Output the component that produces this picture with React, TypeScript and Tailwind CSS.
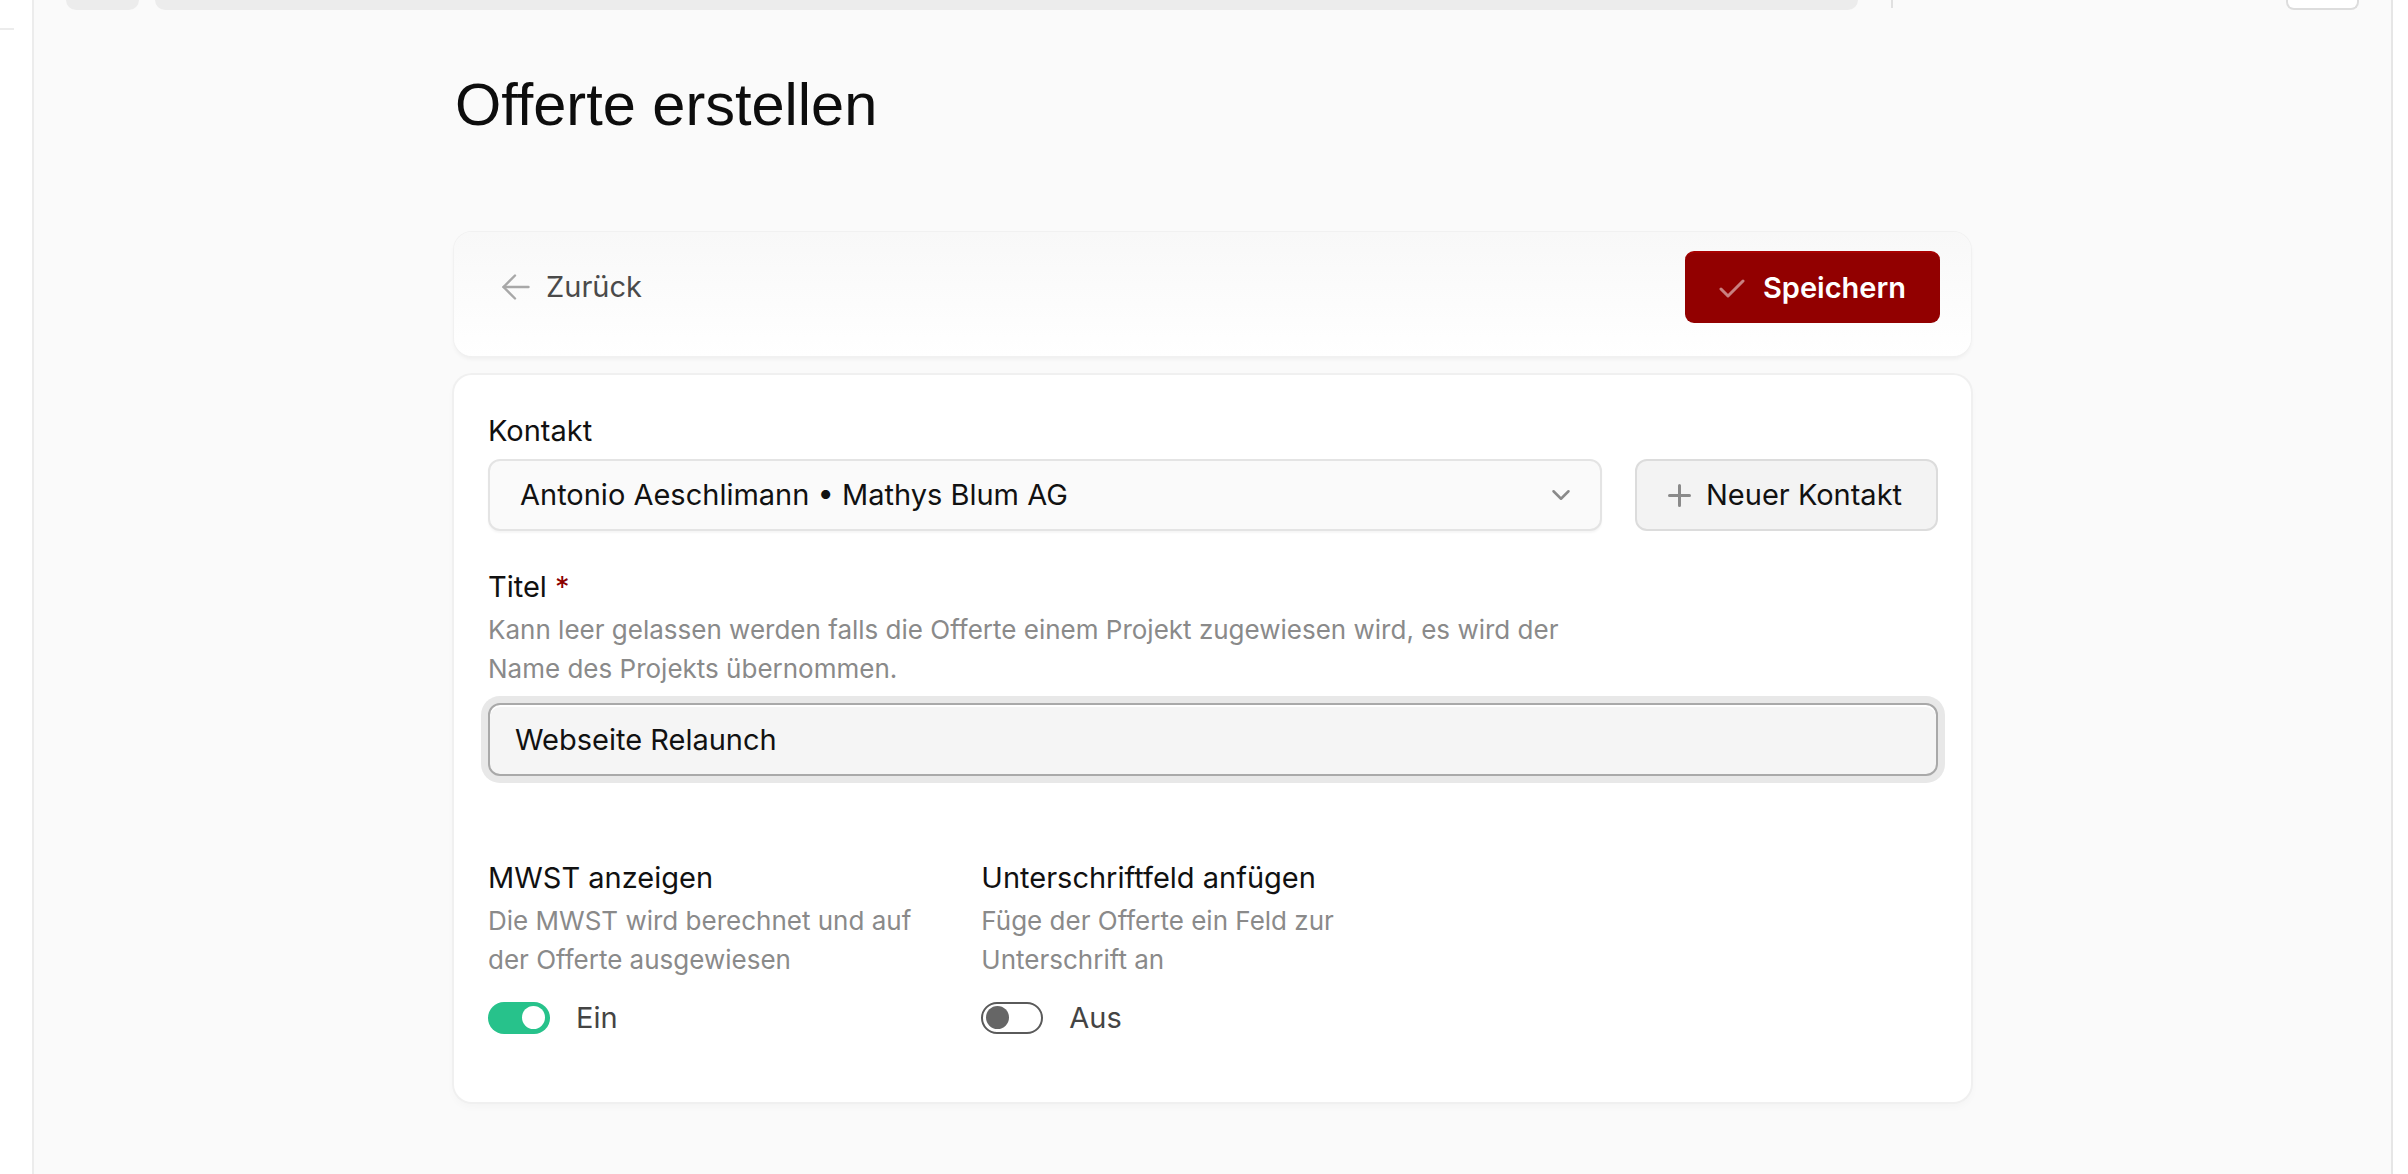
import React from "react";

const inter = { fontFamily: "Inter, 'Noto Sans', sans-serif" };

function Toggle({ on }: { on: boolean }) {
  return on ? (
    <div className="flex h-[32px] w-[62px] items-center justify-end rounded-full bg-[#27c28b] pr-[5px]">
      <div className="h-[23px] w-[23px] rounded-full bg-white" />
    </div>
  ) : (
    <div className="flex h-[32px] w-[62px] items-center justify-start rounded-full border-2 border-[#5a5a5a] bg-white pl-[3px]">
      <div className="h-[23px] w-[23px] rounded-full bg-[#666666]" />
    </div>
  );
}

export default function App() {
  return (
    <div className="flex h-[1174px] w-[2408px] overflow-hidden bg-white" style={inter}>
      {/* sidebar */}
      <div className="w-[34px] shrink-0 border-r-2 border-[#ececec] bg-white">
        <div className="mt-[28px] h-[2px] w-[14px] bg-[#ececec]" />
      </div>

      {/* main */}
      <div className="flex w-[2359px] shrink-0 flex-col border-r-2 border-[#e6e6e6] bg-[#fafafa]">
        {/* top bar (scrolled) */}
        <div className="flex h-[10px] items-start pl-[32px] pr-[32px]">
          <div className="h-[10px] w-[73px] rounded-b-[10px] bg-[#ececec]" />
          <div className="ml-[16px] h-[10px] w-[1703px] rounded-b-[10px] bg-[#ececec]" />
          <div className="ml-[33px] h-[8px] w-[2px] bg-[#e0e0e0]" />
          <div className="ml-auto h-[10px] w-[73px] rounded-b-[8px] border-x-2 border-b-2 border-[#dddddd] bg-white" />
        </div>

        <div className="mx-auto flex w-[1517px] flex-col">
          <h1
            className="mt-[59px] text-[59.5px] leading-[71px] font-normal text-[#0d0d0d]"
            style={{ fontFamily: "'Liberation Sans', Arial, sans-serif", marginLeft: 1 }}
          >
            Offerte erstellen
          </h1>

          {/* action card */}
          <div className="mt-[92px] flex h-[124px] items-start justify-between rounded-[18px] bg-gradient-to-b from-[#f8f8f8] to-white pb-[33px] pl-[48px] pr-[31px] pt-[19px] shadow-[0_0_0_1px_#f1f1f1,0_3px_4px_rgba(0,0,0,0.05)]">
            <div className="flex h-[72px] items-center gap-[16px] text-[29px] text-[#4a4a4a]">
              <svg width="28" height="26" viewBox="0 0 28 26" fill="none" stroke="#a8a8a8" strokeWidth="2.4" strokeLinecap="round" strokeLinejoin="round">
                <path d="M26.5 13H1.5" />
                <path d="M13 1.5 1.5 13 13 24.5" />
              </svg>
              <span>Zurück</span>
            </div>
            <button className="flex h-[72px] w-[255px] items-center justify-center gap-[18px] rounded-[9px] border-t-2 border-[#a80000] bg-[#920000] text-[29px] font-semibold text-white">
              <svg width="26" height="21" viewBox="0 0 26 21" fill="none" stroke="rgba(255,255,255,0.5)" strokeWidth="3" strokeLinecap="round" strokeLinejoin="round">
                <path d="M2 11 9 18 24 3" />
              </svg>
              <span>Speichern</span>
            </button>
          </div>

          {/* form card */}
          <div className="mt-[19px] flex flex-col rounded-[18px] bg-white pb-[62px] pl-[34px] pr-[33px] pt-[33px] shadow-[0_0_0_2px_#f0f0f0,0_4px_10px_rgba(0,0,0,0.03)]">
            <div className="text-[29px] leading-[45px] text-[#111111]">Kontakt</div>
            <div className="mt-[6px] flex gap-[33px]">
              <div className="flex h-[72px] flex-1 items-center justify-between rounded-[12px] border-2 border-[#e4e4e4] bg-[#fafafa] pl-[30px] pr-[24px] text-[29px] text-[#111111] shadow-[0_2px_2px_rgba(0,0,0,0.04)]">
                <span>Antonio Aeschlimann • Mathys Blum AG</span>
                <svg width="30" height="30" viewBox="0 0 24 24" fill="none" stroke="#8a8a8a" strokeWidth="2" strokeLinecap="round" strokeLinejoin="round">
                  <path d="m6 9 6 6 6-6" />
                </svg>
              </div>
              <button className="flex h-[72px] w-[303px] items-center gap-[15px] rounded-[12px] border-2 border-[#dcdcdc] bg-[#f3f3f3] pl-[31px] text-[29px] text-[#111111]">
                <svg width="23" height="23" viewBox="0 0 23 23" fill="none" stroke="#8a8a8a" strokeWidth="3" strokeLinecap="round">
                  <path d="M11.5 1.5v20M1.5 11.5h20" />
                </svg>
                <span>Neuer Kontakt</span>
              </button>
            </div>

            <div className="mt-[33px] text-[29px] leading-[45px] text-[#111111]">
              Titel <span className="text-[#8b0000]">*</span>
            </div>
            <div className="mt-[2px] max-w-[1120px] text-[26px] leading-[38.5px] text-[#8a8a8a]">
              Kann leer gelassen werden falls die Offerte einem Projekt zugewiesen wird, es wird der Name des Projekts übernommen.
            </div>
            <div className="mt-[15px] flex h-[73px] items-center rounded-[12px] border-2 border-[#a9a9a9] bg-[#f5f5f5] pl-[25px] text-[29px] text-[#111111] shadow-[inset_0_2px_0_#ffffff,0_0_0_7px_#e8e8e8]">
              Webseite Relaunch
            </div>

            <div className="mt-[79px] grid grid-cols-3 gap-x-[30px]">
              <div className="flex flex-col">
                <div className="text-[29px] leading-[45px] text-[#111111]">MWST anzeigen</div>
                <div className="mt-[2px] text-[26px] leading-[38.5px] text-[#8a8a8a]">
                  Die MWST wird berechnet und auf der Offerte ausgewiesen
                </div>
                <div className="mt-[16px] flex h-[45px] items-center gap-[26px]">
                  <Toggle on />
                  <span className="text-[29px] text-[#444444]">Ein</span>
                </div>
              </div>
              <div className="flex flex-col">
                <div className="text-[29px] leading-[45px] text-[#111111]">Unterschriftfeld anfügen</div>
                <div className="mt-[2px] text-[26px] leading-[38.5px] text-[#8a8a8a]">
                  Füge der Offerte ein Feld zur Unterschrift an
                </div>
                <div className="mt-[16px] flex h-[45px] items-center gap-[26px]">
                  <Toggle on={false} />
                  <span className="text-[29px] text-[#444444]">Aus</span>
                </div>
              </div>
              <div />
            </div>
          </div>
        </div>
      </div>

      <div className="flex-1 bg-white" />
    </div>
  );
}
